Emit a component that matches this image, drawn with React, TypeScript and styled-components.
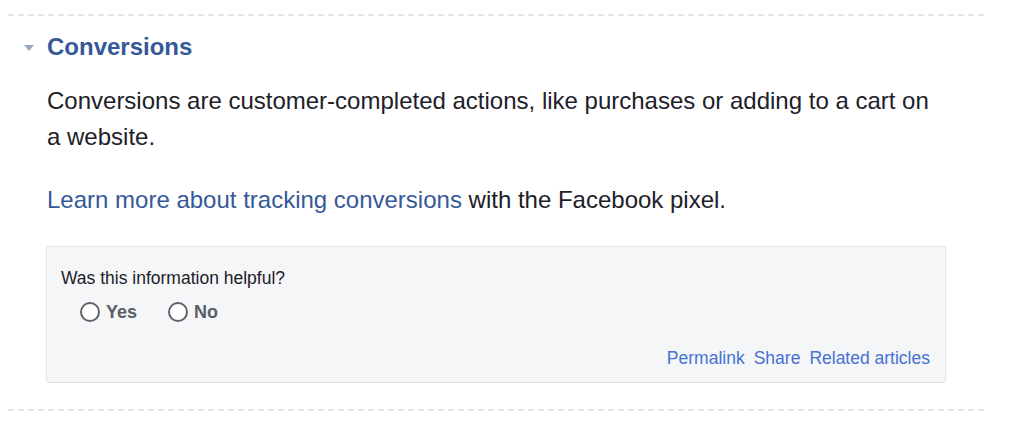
import styled, { createGlobalStyle } from "styled-components";

const GlobalStyle = createGlobalStyle`
  body {
    margin: 0;
    background: #fff;
    font-family: "Liberation Sans", Arial, Helvetica, sans-serif;
  }
`;

const Section = styled.section`
  margin: 14px 0 0 8px;
  width: 978px;
`;

const Divider = styled.div`
  height: 2px;
  background: repeating-linear-gradient(
    to right,
    #e3e5e8 0 6px,
    transparent 6px 10px
  );
`;

const Header = styled.div`
  display: flex;
  align-items: center;
  gap: 13px;
  margin: 17px 0 0 16px;
`;

const Caret = styled.span`
  width: 0;
  height: 0;
  border-left: 5px solid transparent;
  border-right: 5px solid transparent;
  border-top: 6px solid #9ba6c0;
  margin-top: 2px;
`;

const Title = styled.h2`
  margin: 0;
  font-size: 24px;
  line-height: 28px;
  font-weight: bold;
  color: #365899;
`;

const Body = styled.div`
  padding-left: 38px;
`;

const Paragraph = styled.p<{ $gap: number }>`
  margin: ${(p) => p.$gap}px 0 0 1px;
  width: 890px;
  font-size: 24px;
  line-height: 36px;
  color: #1d2129;
`;

const Link = styled.a`
  color: #365899;
  text-decoration: none;
`;

const Feedback = styled.div`
  margin: 28px 0 26px;
  width: 900px;
  box-sizing: border-box;
  background: #f5f6f7;
  border: 1px solid #e5e6e9;
  border-bottom-color: #dcdee3;
  border-radius: 3px;
  padding: 20px 15px 13px 14px;
`;

const Question = styled.div`
  font-size: 17.5px;
  line-height: 22px;
  color: #1d2129;
`;

const Options = styled.div`
  display: flex;
  gap: 31px;
  margin: 12px 0 0 19px;
`;

const Option = styled.label`
  display: flex;
  align-items: center;
  gap: 6px;
  font-size: 18px;
  line-height: 22px;
  font-weight: bold;
  color: #5a5e66;
`;

const Radio = styled.span`
  width: 16px;
  height: 16px;
  border: 2px solid #5f636b;
  border-radius: 50%;
  background: #fff;
`;

const Actions = styled.div`
  display: flex;
  justify-content: flex-end;
  gap: 9px;
  margin-top: 24px;
`;

const ActionLink = styled.a`
  font-size: 17.5px;
  line-height: 22px;
  color: #4671d3;
  text-decoration: none;
`;

export default function App() {
  return (
    <>
      <GlobalStyle />
      <Section>
        <Divider />
        <Header>
          <Caret />
          <Title>Conversions</Title>
        </Header>
        <Body>
          <Paragraph $gap={22}>
            Conversions are customer-completed actions, like purchases or
            adding to a cart on a website.
          </Paragraph>
          <Paragraph $gap={27}>
            <Link href="#">Learn more about tracking conversions</Link> with
            the Facebook pixel.
          </Paragraph>
          <Feedback>
            <Question>Was this information helpful?</Question>
            <Options>
              <Option>
                <Radio />
                Yes
              </Option>
              <Option>
                <Radio />
                No
              </Option>
            </Options>
            <Actions>
              <ActionLink href="#">Permalink</ActionLink>
              <ActionLink href="#">Share</ActionLink>
              <ActionLink href="#">Related articles</ActionLink>
            </Actions>
          </Feedback>
        </Body>
        <Divider />
      </Section>
    </>
  );
}
